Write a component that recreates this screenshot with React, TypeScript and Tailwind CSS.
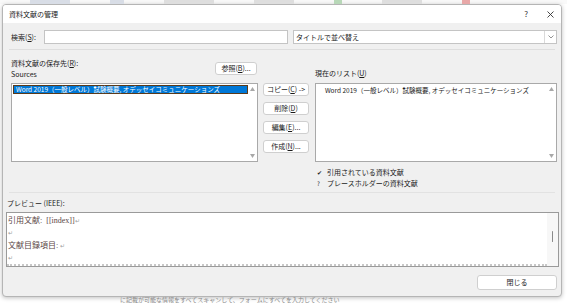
import React from 'react';

const ui = { fontFamily: '"Noto Sans CJK JP", "Liberation Sans", sans-serif' };
const serif = { fontFamily: '"Liberation Serif", "Noto Sans CJK JP", serif' };

const entry = 'Word 2019（一般レベル）試験概要, オデッセイコミュニケーションズ';

const Btn: React.FC<{ children: React.ReactNode; className?: string }> = ({ children, className }) => (
  <div
    className={`flex items-center justify-center bg-white border border-[#cfcfcf] rounded-[3px] text-[7px] text-[#1a1a1a] leading-none ${className ?? ''}`}
  >
    {children}
  </div>
);

const U: React.FC<{ children: React.ReactNode }> = ({ children }) => <span className="underline">{children}</span>;

const ScrollArrows: React.FC = () => (
  <div className="w-[9px] flex flex-col justify-between items-center py-[3px] text-[#a8a8a8]">
    <svg width="5" height="4" viewBox="0 0 5 4"><path d="M0 4 L2.5 0 L5 4Z" fill="currentColor" /></svg>
    <svg width="5" height="4" viewBox="0 0 5 4"><path d="M0 0 L2.5 4 L5 0Z" fill="currentColor" /></svg>
  </div>
);

export default function App() {
  return (
    <div className="w-[567px] h-[303px] bg-white overflow-hidden relative" style={ui}>
      {/* ribbon behind the dialog */}
      <div className="h-[4px] flex gap-[40px] pl-[30px] bg-[#f9f9f9]">
        <div className="w-[40px] h-[4px] bg-[#d8dde6]" />
        <div className="w-[14px] h-[4px] bg-[#d8dde6]" />
        <div className="w-[50px] h-[4px] bg-[#dedede]" />
        <div className="w-[40px] h-[4px] bg-[#dedede]" />
        <div className="w-[8px] h-[4px] bg-[#b8d8b8]" />
        <div className="w-[40px] h-[4px] bg-[#dedede]" />
        <div className="w-[8px] h-[4px] bg-[#e8a8a8]" />
      </div>

      <div className="ml-[2px] w-[560px] h-[293px] flex flex-col border border-[#b5b5b5] rounded-[4px] overflow-hidden shadow-[0_1px_4px_rgba(0,0,0,0.25)] bg-[#f0f0f0]">
        {/* title bar */}
        <div className="h-[18px] shrink-0 bg-white flex items-center pl-[6px] pr-[7px]">
          <span className="text-[7px] text-[#1a1a1a]">資料文献の管理</span>
          <span className="ml-auto text-[8px] text-[#333]">?</span>
          <svg className="ml-[19px]" width="7" height="7" viewBox="0 0 7 7">
            <path d="M0.5 0.5 L6.5 6.5 M6.5 0.5 L0.5 6.5" stroke="#333" strokeWidth="0.9" />
          </svg>
        </div>

        <div className="flex-1 flex flex-col px-[4px]">
          {/* search row */}
          <div className="flex items-center mt-[7px] h-[14px]">
            <span className="text-[7px] text-[#1a1a1a] ml-[4px] w-[33px]">検索(<U>S</U>):</span>
            <div className="w-[246px] h-[14px] bg-white border border-[#c4c4c4]" />
            <div className="ml-[5px] w-[266px] h-[14px] bg-white border border-[#c4c4c4] flex items-center">
              <span className="text-[7px] text-[#1a1a1a] pl-[2px]">タイトルで並べ替え</span>
              <div className="ml-auto w-[12px] h-full border-l border-[#dadada] flex items-center justify-center">
                <svg width="6" height="4" viewBox="0 0 6 4"><path d="M0.5 0.5 L3 3 L5.5 0.5" stroke="#777" strokeWidth="0.8" fill="none" /></svg>
              </div>
            </div>
          </div>

          <div className="h-px bg-[#dedede] mt-[5px] mx-[2px]" />

          {/* sources */}
          <div className="flex mt-[4px]">
            <div className="w-[248px] ml-[4px] flex flex-col">
              <div className="flex items-start">
                <div className="flex flex-col">
                  <span className="text-[7px] text-[#1a1a1a] leading-[10px] mt-[4px]">資料文献の保存先(<U>R</U>):</span>
                  <span className="text-[7px] text-[#1a1a1a] leading-[10px] mt-[1px]">Sources</span>
                </div>
                <Btn className="ml-auto mr-[1px] mt-[8px] w-[42px] h-[13px]">参照(<U>B</U>)...</Btn>
              </div>
              <div className="mt-[4px] h-[79px] bg-white border border-[#a9a9a9] flex">
                <div className="flex-1 pt-[1px] pl-[1px]">
                  <div className="h-[9px] bg-[#0078d7] border border-[#5a3a1a] flex items-center pl-[2px]">
                    <span className="text-[6.5px] text-white whitespace-nowrap leading-none">{entry}</span>
                  </div>
                </div>
                <ScrollArrows />
              </div>
            </div>

            <div className="w-[46px] ml-[5px] flex flex-col gap-[6px] pt-[29px]">
              <Btn className="h-[13px]">コピー(<U>C</U>) -&gt;</Btn>
              <Btn className="h-[13px]">削除(<U>D</U>)</Btn>
              <Btn className="h-[13px]">編集(<U>E</U>)...</Btn>
              <Btn className="h-[13px]">作成(<U>N</U>)...</Btn>
            </div>

            <div className="w-[243px] ml-[6px] flex flex-col">
              <span className="text-[7px] text-[#1a1a1a] leading-[10px] mt-[14px]">現在のリスト(<U>U</U>)</span>
              <div className="mt-[5px] h-[79px] bg-white border border-[#a9a9a9] flex">
                <div className="flex-1 flex flex-col pt-[3px] pl-[9px]">
                  <span className="text-[6.5px] text-[#1a1a1a] whitespace-nowrap leading-none">{entry}</span>
                </div>
                <ScrollArrows />
              </div>
            </div>
          </div>

          {/* legend */}
          <div className="ml-[310px] mt-[5px] flex flex-col gap-[1px]">
            <div className="flex items-center h-[10px]">
              <span className="w-[10px] text-[6px] text-[#222]">✔</span>
              <span className="text-[7px] text-[#1a1a1a]">引用されている資料文献</span>
            </div>
            <div className="flex items-center h-[10px]">
              <span className="w-[10px] text-[6px] text-[#222]">?</span>
              <span className="text-[7px] text-[#1a1a1a]">プレースホルダーの資料文献</span>
            </div>
          </div>

          <div className="h-px bg-[#e2e2e2] mt-[4px] mx-[2px]" />

          {/* preview */}
          <span className="text-[7px] text-[#1a1a1a] mt-[5px] leading-[10px]">プレビュー (IEEE):</span>
          <div className="mt-[4px] -ml-[1px] w-[553px] h-[55px] bg-white border border-[#9a9a9a] flex">
            <div className="flex-1 flex flex-col pl-[1px] pt-[2px] border-b-2 border-dotted border-[#c8c8c8]" style={serif}>
              <div className="h-[12px] text-[8px] text-[#5a4646] leading-[12px]">
                引用文献:&nbsp;&nbsp;[[index]]<span className="text-[6px] text-[#a0a0a0]">↵</span>
              </div>
              <div className="h-[12px] text-[6px] text-[#a0a0a0] leading-[12px]">↵</div>
              <div className="h-[13px] text-[8px] text-[#5a4646] leading-[13px]">
                文献目録項目:&nbsp;<span className="text-[6px] text-[#a0a0a0]">↵</span>
              </div>
              <div className="h-[12px] text-[6px] text-[#a0a0a0] leading-[12px]">↵</div>
            </div>
            <div className="w-[11px] bg-[#f7f7f7] flex justify-center pt-[18px]">
              <div className="w-[1.5px] h-[11px] bg-[#8a8a8a] rounded-full" />
            </div>
          </div>

          <div className="flex justify-end mt-[8px]">
            <Btn className="w-[80px] h-[15px]">閉じる</Btn>
          </div>
        </div>
      </div>

      {/* document text behind */}
      <div className="absolute left-[120px] top-[297px] text-[6px] text-[#888] whitespace-nowrap leading-none">
        に記載が可能な情報をすべてスキャンして、フォームにすべてを入力してください
      </div>
    </div>
  );
}
